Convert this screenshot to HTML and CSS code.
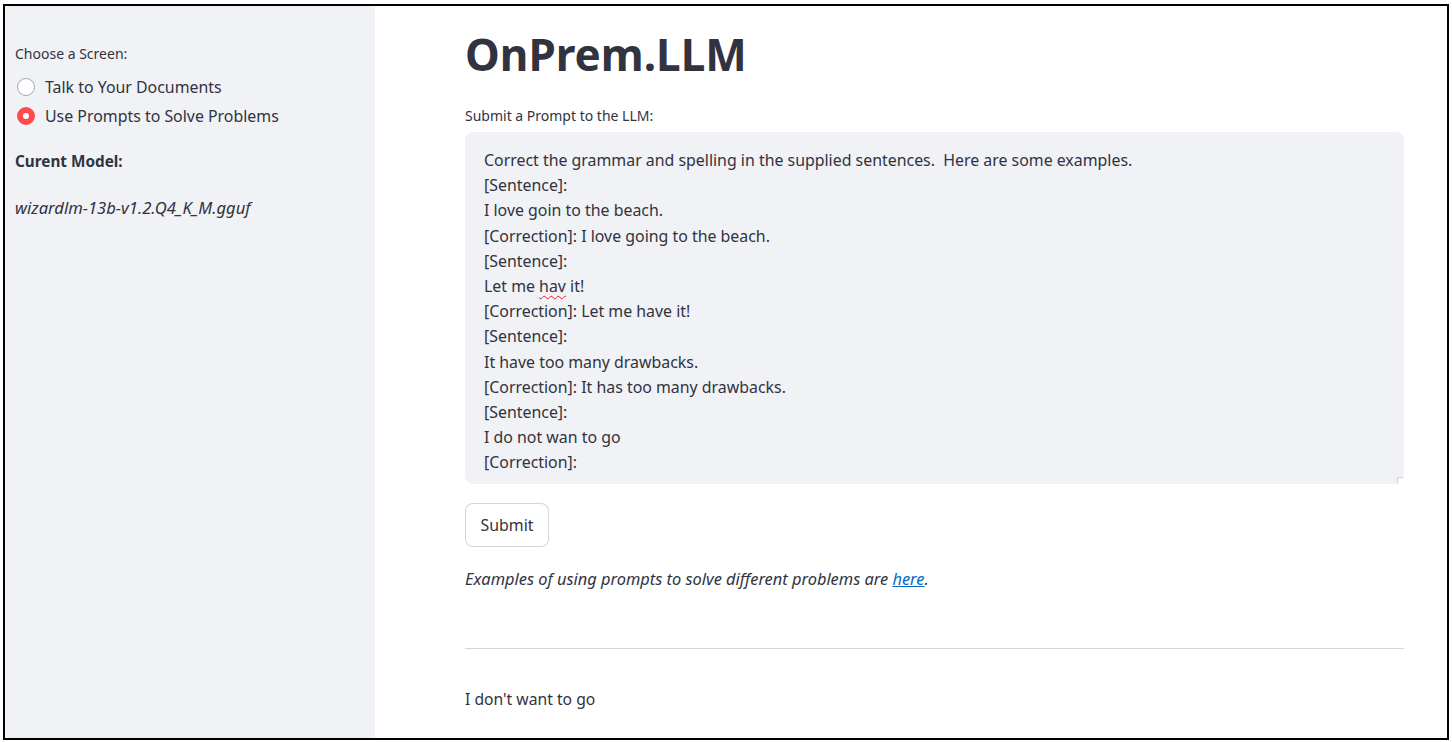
FILE: index.html
```html
<!DOCTYPE html>
<html lang="en">
<head>
<meta charset="utf-8">
<title>OnPrem.LLM</title>
<link rel="stylesheet" href="styles.css">
</head>
<body>
<div class="frame">
  <aside class="sidebar">
    <div class="radio-label">Choose a Screen:</div>
    <div class="radio-group">
      <label class="radio"><span class="dot"></span><span>Talk to Your Documents</span></label>
      <label class="radio checked"><span class="dot"></span><span>Use Prompts to Solve Problems</span></label>
    </div>
    <p class="model-title">Curent Model:</p>
    <p class="model-name">wizardlm-13b-v1.2.Q4_K_M.gguf</p>
  </aside>
  <main class="main">
    <div class="content">
      <h1 class="title">OnPrem.LLM</h1>
      <div class="field-label">Submit a Prompt to the LLM:</div>
      <div class="prompt">Correct the grammar and spelling in the supplied sentences.&nbsp; Here are some examples.
[Sentence]:
I love goin to the beach.
[Correction]: I love going to the beach.
[Sentence]:
Let me <span class="misspelled">hav</span> it!
[Correction]: Let me have it!
[Sentence]:
It have too many drawbacks.
[Correction]: It has too many drawbacks.
[Sentence]:
I do not wan to go
[Correction]:<span class="grip"></span></div>
      <button class="submit" type="button">Submit</button>
      <p class="examples">Examples of using prompts to solve different problems are <a href="#">here</a>.</p>
      <hr class="divider">
      <p class="answer">I don't want to go</p>
    </div>
  </main>
</div>
</body>
</html>
```

FILE: styles.css
```css
* { box-sizing: border-box; }
html, body { margin: 0; background: #fff; }
body {
  padding: 4px 3px;
  font-family: "Noto Sans", Lato, sans-serif;
  font-size: 15.9px;
  color: #31333f;
}
.frame {
  width: 1446px;
  height: 736px;
  border: 2px solid #000;
  display: flex;
  overflow: hidden;
}
.sidebar {
  width: 370px;
  flex: none;
  background: #f0f2f6;
  padding: 38px 10px 0 10px;
}
.radio-label {
  font-size: 14px;
  line-height: 20px;
  height: 20px;
}
.radio-group {
  display: flex;
  flex-direction: column;
  margin-top: 11px;
  gap: 5px;
}
.radio {
  display: flex;
  align-items: center;
  gap: 10px;
  height: 24px;
  font-size: 15.9px;
  padding-left: 2px;
}
.dot {
  width: 18px;
  height: 18px;
  border-radius: 50%;
  border: 1px solid #a3a8b4;
  background: #fff;
  flex: none;
}
.radio.checked .dot {
  border: 6px solid #ff4b4b;
  background: #fff;
}
.model-title {
  margin: 21px 0 0;
  font-weight: 700;
  font-size: 15.3px;
  line-height: 24px;
}
.model-name {
  margin: 23px 0 0;
  font-style: italic;
  font-size: 16.6px;
  line-height: 24px;
}
.main {
  flex: 1;
  padding: 22px 0 0 90px;
}
.content {
  width: 939px;
}
.title {
  margin: 0;
  font-size: 44px;
  font-weight: 700;
  line-height: 52px;
  letter-spacing: 0;
}
.field-label {
  margin-top: 26px;
  font-size: 14px;
  line-height: 20px;
}
.prompt {
  position: relative;
  margin-top: 6px;
  height: 352px;
  background: #f0f2f6;
  border-radius: 8px;
  padding: 16px 19px 8px;
  white-space: pre-wrap;
  font-size: 15.9px;
  line-height: 25.2px;
}
.misspelled {
  text-decoration: underline wavy #e02020;
  text-decoration-thickness: 1px;
  text-underline-offset: 3px;
}
.grip {
  position: absolute;
  right: 1px;
  bottom: 1px;
  width: 6px;
  height: 6px;
  background: #fff;
  border-top: 1px solid #d0d0d0;
  border-left: 1px solid #d0d0d0;
}
.submit {
  display: block;
  margin-top: 19px;
  width: 84px;
  height: 44px;
  background: #fff;
  border: 1px solid rgba(49, 51, 63, 0.2);
  border-radius: 8px;
  font-family: inherit;
  font-size: 15.9px;
  color: #31333f;
  padding: 0;
}
.examples {
  margin: 20px 0 0;
  font-style: italic;
  font-size: 16.4px;
  line-height: 24px;
}
.examples a { color: #0068c9; }
.divider {
  margin: 57px 0 0;
  border: none;
  border-top: 1px solid #d6d6d9;
}
.answer {
  margin: 38px 0 0;
  font-size: 15.7px;
  line-height: 24px;
}
```
